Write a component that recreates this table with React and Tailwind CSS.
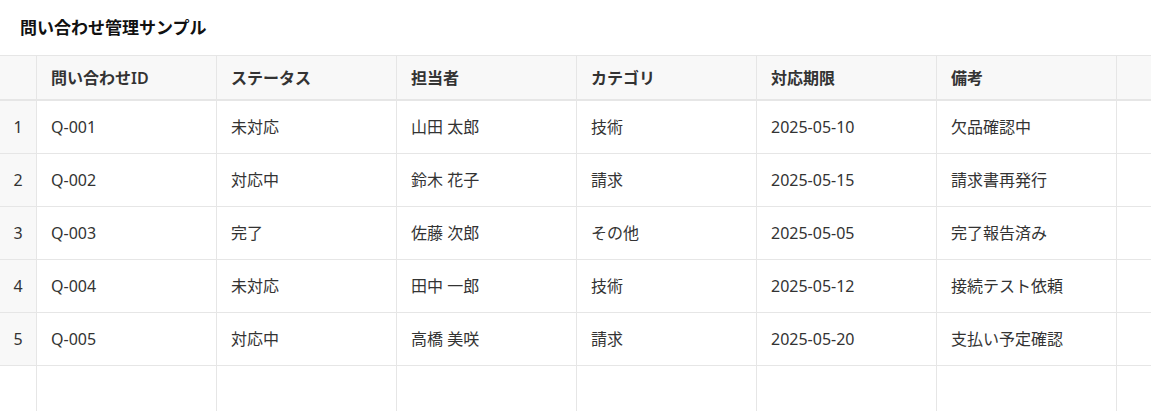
import React from 'react';

const columns = ['問い合わせID', 'ステータス', '担当者', 'カテゴリ', '対応期限', '備考', ''];

const rows = [
  ['Q-001', '未対応', '山田 太郎', '技術', '2025-05-10', '欠品確認中'],
  ['Q-002', '対応中', '鈴木 花子', '請求', '2025-05-15', '請求書再発行'],
  ['Q-003', '完了', '佐藤 次郎', 'その他', '2025-05-05', '完了報告済み'],
  ['Q-004', '未対応', '田中 一郎', '技術', '2025-05-12', '接続テスト依頼'],
  ['Q-005', '対応中', '高橋 美咲', '請求', '2025-05-20', '支払い予定確認'],
];

const font = { fontFamily: '"Noto Sans", "Noto Sans CJK JP", sans-serif' };

const App = () => {
  return (
    <div className="w-[1151px] h-[411px] overflow-hidden bg-white text-[#333]" style={font}>
      <div className="h-[55px] flex items-center px-5">
        <h1 className="text-[17px] font-bold text-[#111]">問い合わせ管理サンプル</h1>
      </div>

      <div className="w-[1300px]">
        {/* header */}
        <div className="flex h-[46px] border-t border-b-2 border-[#e6e6e6] bg-[#f8f8f8]">
          <div className="w-[37px] shrink-0 border-r border-[#e6e6e6]" />
          {columns.map((c, i) => (
            <div
              key={i}
              className="w-[180px] shrink-0 border-r border-[#e6e6e6] flex items-center pl-[14px] text-[16px] font-semibold text-[#333]"
            >
              {c}
            </div>
          ))}
        </div>

        {/* body */}
        {rows.map((r, ri) => (
          <div key={ri} className="flex h-[53px] border-b border-[#e6e6e6]">
            <div className="w-[37px] shrink-0 border-r border-[#e6e6e6] bg-[#f8f8f8] flex items-center justify-center text-[16px] text-[#333]">
              {ri + 1}
            </div>
            {[...r, ''].map((v, ci) => (
              <div
                key={ci}
                className="w-[180px] shrink-0 border-r border-[#e6e6e6] flex items-center pl-[14px] text-[16px]"
              >
                {v}
              </div>
            ))}
          </div>
        ))}

        {/* empty area */}
        <div className="flex h-[60px]">
          <div className="w-[37px] shrink-0 border-r border-[#e6e6e6]" />
          {columns.map((_, i) => (
            <div key={i} className="w-[180px] shrink-0 border-r border-[#e6e6e6]" />
          ))}
        </div>
      </div>
    </div>
  );
};

export default App;
